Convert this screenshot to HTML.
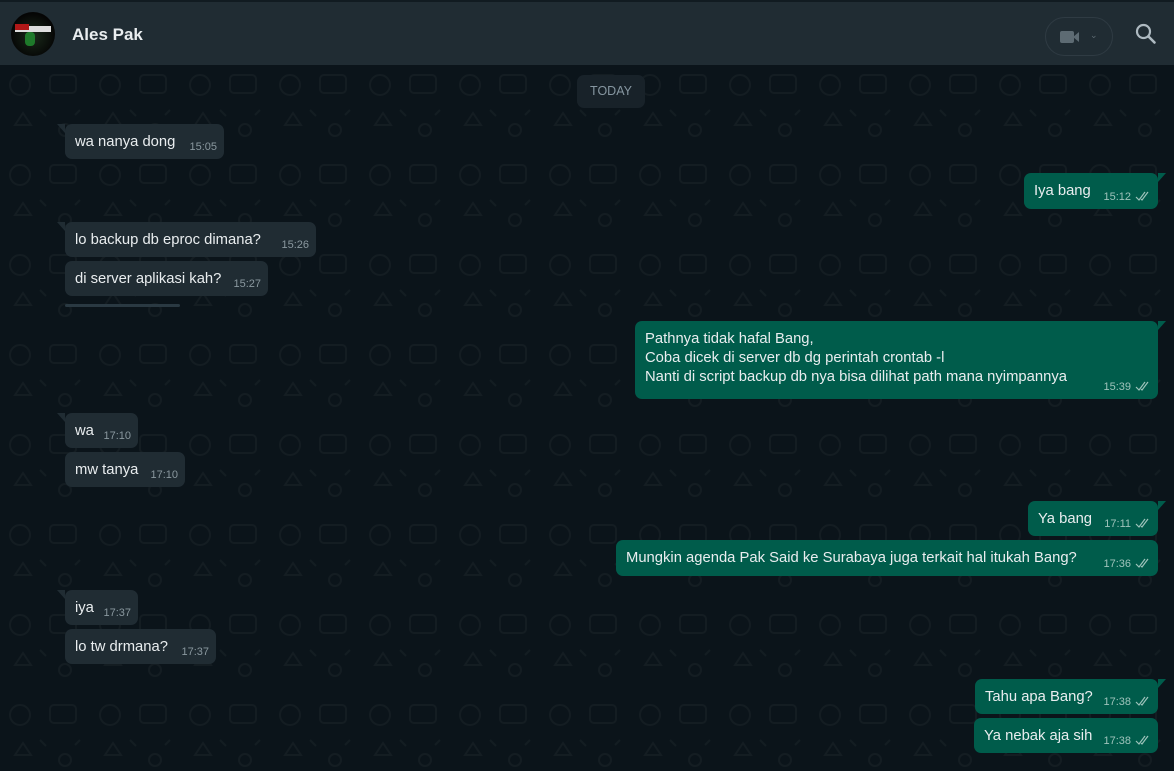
<!DOCTYPE html>
<html><head><meta charset="utf-8"><style>
*{margin:0;padding:0;box-sizing:border-box}
body{width:1174px;height:771px;overflow:hidden;background:#0b141a;font-family:"Liberation Sans",sans-serif;position:relative}
.top{position:absolute;left:0;top:0;width:1174px;height:2px;background:#111b21}
.hdr{position:absolute;left:0;top:2px;width:1174px;height:63px;background:#202c33}
.av{position:absolute;left:11px;top:10px;width:44px;height:44px;border-radius:50%;background:radial-gradient(circle at 50% 55%,#1a2a1a,#050505 70%);overflow:hidden}
.name{position:absolute;left:72px;top:23px;color:#e9edef;font-size:17px;font-weight:bold}
.vid{position:absolute;left:1045px;top:15px;width:68px;height:39px;border:1px solid #2f3b43;border-radius:20px}
.chip{position:absolute;left:577px;top:75px;width:68px;height:33px;background:#182229;border-radius:7px;color:#8696a0;font-size:12.5px;text-align:center;line-height:33px}
.b{position:absolute;height:35px;border-radius:7px;color:#e9edef;font-size:14.8px;white-space:nowrap;padding:9px 0 0 10px;line-height:19px}
.in{background:#202c33}
.out{background:#005c4b}
.t{position:absolute;bottom:2px;font-size:11px;color:#8a989f}
.out .t{color:#9ec3bb}
.ck{display:inline-block;margin-left:4px;vertical-align:-1px}
.tl{position:absolute;top:0;width:0;height:0;border-top:9px solid}
.in .tl{left:-8px;border-left:8px solid transparent;border-top-color:#202c33}
.out .tl{right:-8px;border-right:8px solid transparent;border-top-color:#005c4b}
.pat{position:absolute;left:0;top:65px;width:1174px;height:706px;opacity:.035}
</style></head><body>
<svg class="pat" width="1174" height="706"><defs><pattern id="p" width="90" height="90" patternUnits="userSpaceOnUse"><g fill="none" stroke="#fff" stroke-width="2"><circle cx="20" cy="20" r="10"/><rect x="50" y="10" width="26" height="18" rx="4"/><path d="M15 60l8 -12 8 12z"/><circle cx="65" cy="65" r="6"/><path d="M40 45l6 6M80 45l-5 5"/></g></pattern></defs><rect width="1174" height="706" fill="url(#p)"/></svg>
<div class="top"></div>
<div class="hdr">
<div class="av"><div style="position:absolute;left:4px;top:14px;width:36px;height:6px;background:#ddd"></div><div style="position:absolute;left:4px;top:12px;width:14px;height:6px;background:#b01818"></div><div style="position:absolute;left:14px;top:20px;width:10px;height:14px;background:#1e7a2a;border-radius:4px"></div></div>
<div class="name">Ales Pak</div>
<div class="vid"><div style="position:absolute;left:14px;top:13px;width:14px;height:12px;background:#5d6b73;border-radius:2px"></div><div style="position:absolute;left:27px;top:14px;width:0;height:0;border-top:5px solid transparent;border-bottom:5px solid transparent;border-right:6px solid #5d6b73"></div><div style="position:absolute;left:44px;top:12px;color:#5d6b73;font-size:9px">⌄</div></div>
<svg style="position:absolute;left:1135px;top:21px" width="22" height="22" viewBox="0 0 22 22"><circle cx="8.5" cy="8.5" r="6.5" fill="none" stroke="#aebac1" stroke-width="2.2"/><path d="M13.5 13.5l6 6" stroke="#aebac1" stroke-width="2.6" stroke-linecap="round"/></svg>
</div>
<div class="chip">TODAY</div>

<div class="b in" style="left:65px;top:124px;width:159px">wa nanya dong<span class="t" style="right:7px">15:05</span><i class="tl"></i></div>
<div class="b in" style="left:65px;top:222px;width:251px">lo backup db eproc dimana?<span class="t" style="right:7px">15:26</span><i class="tl"></i></div>
<div class="b in" style="left:65px;top:261px;width:203px">di server aplikasi kah?<span class="t" style="right:7px">15:27</span></div>
<div style="position:absolute;left:65px;top:304px;width:115px;height:3px;background:#2a3942;border-radius:2px"></div>
<div class="b in" style="left:65px;top:413px;width:73px">wa<span class="t" style="right:7px">17:10</span><i class="tl"></i></div>
<div class="b in" style="left:65px;top:452px;width:120px">mw tanya<span class="t" style="right:7px">17:10</span></div>
<div class="b in" style="left:65px;top:590px;width:73px">iya<span class="t" style="right:7px">17:37</span><i class="tl"></i></div>
<div class="b in" style="left:65px;top:629px;width:151px">lo tw drmana?<span class="t" style="right:7px">17:37</span></div>

<div class="b out" style="left:1024px;top:173px;width:134px;height:36px">Iya bang<span class="t" style="right:7px">15:12<svg class="ck" width="16" height="10" viewBox="0 0 16 10"><path d="M1 6l3 3 6-8M6 8l1 1 6-8" fill="none" stroke="#9ec3bb" stroke-width="1.2"/></svg></span><i class="tl"></i></div>
<div class="b out" style="left:635px;top:321px;width:523px;height:78px">Pathnya tidak hafal Bang,<br>Coba dicek di server db dg perintah crontab -l<br>Nanti di script backup db nya bisa dilihat path mana nyimpannya<span class="t" style="right:7px">15:39<svg class="ck" width="16" height="10" viewBox="0 0 16 10"><path d="M1 6l3 3 6-8M6 8l1 1 6-8" fill="none" stroke="#9ec3bb" stroke-width="1.2"/></svg></span><i class="tl"></i></div>
<div class="b out" style="left:1028px;top:501px;width:130px">Ya bang<span class="t" style="right:7px">17:11<svg class="ck" width="16" height="10" viewBox="0 0 16 10"><path d="M1 6l3 3 6-8M6 8l1 1 6-8" fill="none" stroke="#9ec3bb" stroke-width="1.2"/></svg></span><i class="tl"></i></div>
<div class="b out" style="left:616px;top:540px;width:542px;height:36px">Mungkin agenda Pak Said ke Surabaya juga terkait hal itukah Bang?<span class="t" style="right:7px">17:36<svg class="ck" width="16" height="10" viewBox="0 0 16 10"><path d="M1 6l3 3 6-8M6 8l1 1 6-8" fill="none" stroke="#9ec3bb" stroke-width="1.2"/></svg></span></div>
<div class="b out" style="left:975px;top:679px;width:183px">Tahu apa Bang?<span class="t" style="right:7px">17:38<svg class="ck" width="16" height="10" viewBox="0 0 16 10"><path d="M1 6l3 3 6-8M6 8l1 1 6-8" fill="none" stroke="#9ec3bb" stroke-width="1.2"/></svg></span><i class="tl"></i></div>
<div class="b out" style="left:974px;top:718px;width:184px">Ya nebak aja sih<span class="t" style="right:7px">17:38<svg class="ck" width="16" height="10" viewBox="0 0 16 10"><path d="M1 6l3 3 6-8M6 8l1 1 6-8" fill="none" stroke="#9ec3bb" stroke-width="1.2"/></svg></span></div>
</body></html>
